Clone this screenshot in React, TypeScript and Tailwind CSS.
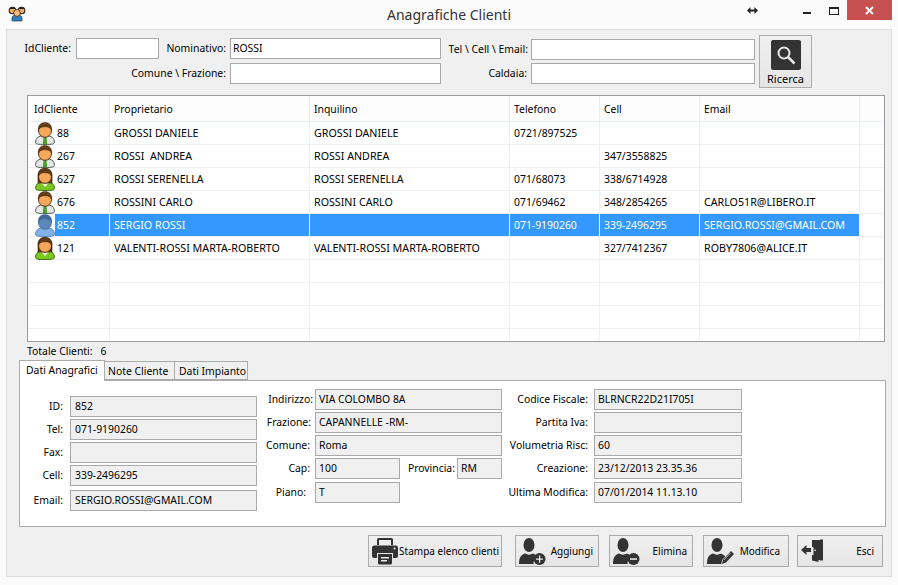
import React from 'react'

type Cliente = { id: string; prop: string; inq: string; tel: string; cell: string; email: string; kind: 'man' | 'woman' | 'sel' }

const clienti: Cliente[] = [
  { id: '88', prop: 'GROSSI DANIELE', inq: 'GROSSI DANIELE', tel: '0721/897525', cell: '', email: '', kind: 'man' },
  { id: '267', prop: 'ROSSI  ANDREA', inq: 'ROSSI ANDREA', tel: '', cell: '347/3558825', email: '', kind: 'man' },
  { id: '627', prop: 'ROSSI SERENELLA', inq: 'ROSSI SERENELLA', tel: '071/68073', cell: '338/6714928', email: '', kind: 'woman' },
  { id: '676', prop: 'ROSSINI CARLO', inq: 'ROSSINI CARLO', tel: '071/69462', cell: '348/2854265', email: 'CARLO51R@LIBERO.IT', kind: 'man' },
  { id: '852', prop: 'SERGIO ROSSI', inq: '', tel: '071-9190260', cell: '339-2496295', email: 'SERGIO.ROSSI@GMAIL.COM', kind: 'sel' },
  { id: '121', prop: 'VALENTI-ROSSI MARTA-ROBERTO', inq: 'VALENTI-ROSSI MARTA-ROBERTO', tel: '', cell: '327/7412367', email: 'ROBY7806@ALICE.IT', kind: 'woman' },
]

function Avatar({ kind }: { kind: Cliente['kind'] }) {
  const sel = kind === 'sel'
  const skin = sel ? '#5a87b8' : '#f5a85c'
  const hair = sel ? '#41699a' : '#643c18'
  const body = sel ? '#7fb2e6' : kind === 'woman' ? '#7cc81e' : '#e4e7e4'
  const line = sel ? '#5585ba' : kind === 'woman' ? '#356c0c' : '#4f5a54'
  return (
    <svg width="20" height="23" viewBox="0 0 20 23" className="shrink-0">
      <path d="M.6 20.500c0-4.500 2.600-6.800 9.400-6.800s9.400 2.300 9.400 6.800c0 1.500-2.200 2-9.400 2s-9.400-.5-9.400-2z" fill={body} stroke={line} strokeWidth="1" />
      {kind === 'man' && <path d="M8.600 14.500h2.800l.9 7.700H7.700z" fill="#4f9f2e" />}
      {kind === 'woman' && <path d="M5.500 14.200h9L10 19z" fill="#fdf0dc" />}
      {kind === 'woman' && <path d="M3 15V7.500C3 3 5.800.4 10 .4s7 2.600 7 7.100V15z" fill={hair} stroke="#2e1c0a" strokeWidth=".6" />}
      <ellipse cx="10" cy="8.800" rx="6.500" ry="6.500" fill={skin} stroke={sel ? '#41699a' : '#2e1c0a'} strokeWidth=".8" />
      <path d="M3.300 8.500C2.700 3 6.200.4 10 .4s7.300 2.600 6.700 8.100c-1-2.600-3.200-3.800-6.700-3.800s-5.700 1.200-6.700 3.800z" fill={hair} stroke={sel ? '#41699a' : '#2e1c0a'} strokeWidth=".4" />
    </svg>
  )
}

function TitleIcon() {
  return (
    <svg width="18" height="18" viewBox="0 0 18 18">
      <path d="M4 17v-3c0-2 2-3 5-3s5 1 5 3v3z" fill="#2f7fc4" stroke="#1d3a55" strokeWidth=".7" />
      <circle cx="4.500" cy="6.500" r="3.300" fill="#f5ad62" stroke="#222" strokeWidth="1.100" />
      <circle cx="13.500" cy="6.500" r="3.300" fill="#f5ad62" stroke="#222" strokeWidth="1.100" />
      <circle cx="9" cy="9" r="3.400" fill="#f9bd7b" stroke="#222" strokeWidth=".8" />
      <path d="M1.500 5c1-2.500 5-2.500 6 0zM10.500 5c1-2.500 5-2.500 6 0z" fill="#222" />
    </svg>
  )
}

function PrintIcon() {
  return (
    <svg width="28" height="28" viewBox="0 0 28 28" fill="#333" className="shrink-0">
      <path d="M6 8V2.500A1.500 1.500 0 0 1 7.500 1h13A1.500 1.500 0 0 1 22 2.500V8h-2V3H8v5z" />
      <path d="M3.500 8.500h21A2.500 2.500 0 0 1 27 11v8a2 2 0 0 1-2 2h-3v-5H6v5H3a2 2 0 0 1-2-2v-8a2.500 2.500 0 0 1 2.500-2.500z" />
      <path d="M7 17h14v9a1.500 1.500 0 0 1-1.500 1.500h-11A1.500 1.500 0 0 1 7 26z" />
      <path d="M10 20h8v1.500h-8zM10 23h6v1.500h-6z" fill="#eee" />
      <circle cx="23.500" cy="11.500" r="1" fill="#eee" />
    </svg>
  )
}

function Person() {
  return (
    <>
      <ellipse cx="11" cy="8" rx="5.500" ry="7" />
      <path d="M1 27c0-7 2-9 6-10.500 2.500 1.500 5.500 1.500 8 0 2 .8 3.500 1.800 4.300 3.300A8 8 0 0 0 15.500 27z" />
    </>
  )
}

function AddIcon() {
  return (
    <svg width="28" height="28" viewBox="0 0 28 28" fill="#333" className="shrink-0">
      <Person />
      <circle cx="21.500" cy="22" r="6" />
      <path d="M21 18.500h1.200V21.500H25v1.200h-2.800v3H21v-3h-3v-1.200h3z" fill="#eee" />
    </svg>
  )
}

function RemoveIcon() {
  return (
    <svg width="28" height="28" viewBox="0 0 28 28" fill="#333" className="shrink-0">
      <Person />
      <circle cx="21.500" cy="22" r="6" />
      <path d="M18 21.300h7v1.500h-7z" fill="#eee" />
    </svg>
  )
}

function EditIcon() {
  return (
    <svg width="28" height="28" viewBox="0 0 28 28" fill="#333" className="shrink-0">
      <Person />
      <path d="M16 27l1-4.500 8-8.500 3 3-8 8.500z" />
      <path d="M18 22.800l6.500-6.800" stroke="#eee" strokeWidth=".8" fill="none" />
    </svg>
  )
}

function ExitIcon() {
  return (
    <svg width="28" height="28" viewBox="0 0 28 28" fill="#333" className="shrink-0">
      <path d="M12 3h9v20h-2.500v2L12 23.500V18h1.500v-8H12z" />
      <path d="M20 2.500h3v21h-3z" />
      <path d="M1 13l5.500-5v3H11v4H6.500v3z" />
      <rect x="14.500" y="12.500" width="1.300" height="1.500" fill="#eee" />
    </svg>
  )
}

function Label({ text, className }: { text: string; className: string }) {
  return <div className={`text-right leading-[21px] whitespace-nowrap ${className}`}>{text}</div>
}

function Box({ value, className }: { value?: string; className: string }) {
  return (
    <div className={`h-[21px] border border-[#a9a9a9] bg-[#f0f0f0] px-[3px] leading-[19px] whitespace-nowrap overflow-hidden ${className}`}>
      {value}
    </div>
  )
}

function Input({ value, className = '' }: { value?: string; className?: string }) {
  return (
    <div className={`h-[21px] border border-[#a9a9a9] bg-white px-[2px] leading-[19px] ${className}`}>{value}</div>
  )
}

function Field({ label, value, labelW, boxW }: { label: string; value: string; labelW: string; boxW: string }) {
  return (
    <div className="flex">
      <Label text={label} className={labelW} />
      <Box value={value} className={boxW} />
    </div>
  )
}

function ActionButton({ icon, label, className }: { icon: React.ReactNode; label: string; className: string }) {
  return (
    <div className={`h-[32px] flex items-center justify-between pl-[2px] border border-[#acacac] bg-gradient-to-b from-[#f0f0f0] to-[#e5e5e5] text-[10px] ${className}`}>
      {icon}
      <span className="whitespace-nowrap">{label}</span>
    </div>
  )
}

const colW = ['w-[82px]', 'w-[200px]', 'w-[200px]', 'w-[90px]', 'w-[100px]', 'w-[160px]']

function Row({ c }: { c?: Cliente }) {
  const sel = c?.kind === 'sel'
  const cells = c ? [c.prop, c.inq, c.tel, c.cell, c.email] : ['', '', '', '', '']
  const cellCls = `h-[22px] border-r leading-[22px] pl-[4px] whitespace-pre overflow-hidden ${sel ? 'bg-[#3399ff] text-white border-white' : 'border-[#f0f0f0]'}`
  return (
    <div className="flex h-[23px] border-b border-[#f0f0f0] shrink-0">
      <div className={`${colW[0]} h-[22px] flex border-r pl-[7px] ${sel ? 'border-white' : 'border-[#f0f0f0]'}`}>
        {c && <Avatar kind={c.kind} />}
        {c && <div className={`flex-1 leading-[22px] pl-[2px] ${sel ? 'bg-[#3399ff] text-white' : ''}`}>{c.id}</div>}
      </div>
      {cells.map((t, i) => (
        <div key={i} className={`${colW[i + 1]} ${cellCls} ${i === 2 || i === 3 ? '' : 'text-[10.7px]'}`}>{t}</div>
      ))}
    </div>
  )
}

export default function App() {
  return (
    <div className="w-[898px] h-[585px] bg-[#fbfbfb] overflow-hidden text-[10.4px] text-black font-['Noto_Sans',sans-serif]">
      {/* title bar */}
      <div className="h-[29px] grid grid-cols-[1fr_auto_1fr]">
        <div className="pl-[8px] pt-[4px]"><TitleIcon /></div>
        <div className="text-[14px] leading-[30px] text-[#333]">Anagrafiche Clienti</div>
        <div className="flex justify-end pr-[6px] items-start">
          <svg width="11" height="7" viewBox="0 0 11 7" className="mt-[7px] mr-[45px]" fill="#222">
            <path d="M0 3.500L3.500 0v2.500h4V0L11 3.500 7.500 7V4.500h-4V7z" />
          </svg>
          <div className="w-[8px] h-[2px] bg-[#222] mt-[12px] mr-[18px]" />
          <div className="w-[10px] h-[8px] border border-t-2 border-[#222] mt-[7px] mr-[8px]" />
          <div className="w-[45px] h-[20px] bg-[#c75050] text-white flex items-center justify-center">
            <svg width="9" height="9" viewBox="0 0 9 9"><path d="M1 1l7 7M8 1L1 8" stroke="#fff" strokeWidth="1.800" /></svg>
          </div>
        </div>
      </div>

      {/* main panel */}
      <div className="mx-[6px] h-[548px] bg-[#f0f0f0] border border-[#dcdcdc] pl-[12px] pr-[5px] flex flex-col">
        {/* filters */}
        <div className="flex pt-[5px] h-[65px]">
          <div className="grid grid-cols-[57px_83px_71px_211px_90px_224px] grid-rows-[21px_21px] gap-y-[4px] mt-[3px]">
            <Label text="IdCliente:" className="pr-[5px]" />
            <Input />
            <Label text="Nominativo:" className="pr-[4px]" />
            <Input value="ROSSI" />
            <Label text="Tel \ Cell \ Email:" className="pr-[3px] mt-px" />
            <Input className="mt-px" />
            <Label text="Comune \ Frazione:" className="col-span-3 pr-[4px]" />
            <Input />
            <Label text="Caldaia:" className="pr-[4px]" />
            <Input />
          </div>
          <div className="ml-[4px] w-[53px] h-[53px] border border-[#acacac] bg-gradient-to-b from-[#f0f0f0] to-[#e5e5e5] flex flex-col items-center pt-[4px]">
            <div className="w-[30px] h-[30px] bg-[#333] rounded-[2px] flex items-center justify-center">
              <svg width="22" height="22" viewBox="0 0 22 22" fill="none" stroke="#e8e8e8">
                <circle cx="9" cy="9" r="5.500" strokeWidth="2" />
                <path d="M13 13l6.500 6.500" strokeWidth="2.500" />
              </svg>
            </div>
            <div className="leading-[14px] mt-[2px] text-[11px]">Ricerca</div>
          </div>
        </div>

        {/* grid */}
        <div className="ml-[8px] w-[858px] h-[247px] border border-[#9a9a9f] bg-white flex flex-col overflow-hidden">
          <div className="flex h-[26px] border-b border-[#e3effb] bg-[#fdfdfd] shrink-0">
            {['IdCliente', 'Proprietario', 'Inquilino', 'Telefono', 'Cell', 'Email'].map((h, i) => (
              <div key={h} className={`${colW[i]} border-r border-[#e3effb] leading-[26px] ${i === 0 ? 'pl-[6px]' : 'pl-[4px]'}`}>{h}</div>
            ))}
          </div>
          {clienti.map((c) => <Row key={c.id} c={c} />)}
          <Row />
          <Row />
          <Row />
          <Row />
        </div>

        <div className="h-[17px] pl-[8px] leading-[16px] mt-px whitespace-pre">Totale Clienti:<span className="ml-[8px]">6</span></div>

        {/* tabs */}
        <div className="flex items-end h-[20px] whitespace-nowrap">
          <div className="w-[86px] h-[21px] -mb-px relative bg-white border border-b-0 border-[#acacac] pl-[6px] leading-[18px]">Dati Anagrafici</div>
          <div className="w-[70px] h-[19px] border border-l-0 border-[#acacac] pl-[3px] leading-[19px]">Note Cliente</div>
          <div className="w-[73px] h-[19px] border border-l-0 border-[#acacac] pl-[4px] leading-[19px]">Dati Impianto</div>
        </div>
        <div className="w-[867px] h-[147px] border border-[#acacac] bg-white flex items-start">
          <div className="flex flex-col gap-[2px] mt-[15px] w-[237px]">
            <Field label="ID:" value="852" labelW="w-[50px] pr-[7px]" boxW="w-[187px] pl-[4px]" />
            <Field label="Tel:" value="071-9190260" labelW="w-[50px] pr-[7px]" boxW="w-[187px] pl-[4px]" />
            <Field label="Fax:" value="" labelW="w-[50px] pr-[7px]" boxW="w-[187px] pl-[4px]" />
            <Field label="Cell:" value="339-2496295" labelW="w-[50px] pr-[7px]" boxW="w-[187px] pl-[4px]" />
            <div className="mt-[2px]">
              <Field label="Email:" value="SERGIO.ROSSI@GMAIL.COM" labelW="w-[50px] pr-[7px]" boxW="w-[187px] pl-[4px]" />
            </div>
          </div>
          <div className="flex flex-col gap-[2px] mt-[8px] w-[245px] ml-[1px]">
            <Field label="Indirizzo:" value="VIA COLOMBO 8A" labelW="w-[57px] pr-[2px]" boxW="w-[187px]" />
            <Field label="Frazione:" value="CAPANNELLE -RM-" labelW="w-[57px] pr-[4px]" boxW="w-[187px]" />
            <Field label="Comune:" value="Roma" labelW="w-[57px] pr-[5px]" boxW="w-[187px]" />
            <div className="flex">
              <Field label="Cap:" value="100" labelW="w-[57px] pr-[5px]" boxW="w-[85px]" />
              <Field label="Provincia:" value="RM" labelW="w-[57px] pr-[2px]" boxW="w-[45px]" />
            </div>
            <div className="mt-[1px]">
              <Field label="Piano:" value="T" labelW="w-[57px] pr-[9px]" boxW="w-[85px]" />
            </div>
          </div>
          <div className="flex flex-col gap-[2px] mt-[8px] ml-[1px]">
            <Field label="Codice Fiscale:" value="BLRNCR22D21I705I" labelW="w-[90px] pr-[6px]" boxW="w-[148px]" />
            <Field label="Partita Iva:" value="" labelW="w-[90px] pr-[6px]" boxW="w-[148px]" />
            <Field label="Volumetria Risc:" value="60" labelW="w-[90px] pr-[6px]" boxW="w-[148px]" />
            <Field label="Creazione:" value="23/12/2013 23.35.36" labelW="w-[90px] pr-[6px]" boxW="w-[148px]" />
            <div className="mt-[1px]">
              <Field label="Ultima Modifica:" value="07/01/2014 11.13.10" labelW="w-[90px] pr-[6px]" boxW="w-[148px]" />
            </div>
          </div>
        </div>

        {/* actions */}
        <div className="flex justify-end mt-[8px] pr-[3px]">
          <ActionButton icon={<PrintIcon />} label="Stampa elenco clienti" className="w-[134px] pr-[2px]" />
          <ActionButton icon={<AddIcon />} label="Aggiungi" className="w-[84px] ml-[13px] pr-[5px]" />
          <ActionButton icon={<RemoveIcon />} label="Elimina" className="w-[84px] ml-[10px] pr-[5px]" />
          <ActionButton icon={<EditIcon />} label="Modifica" className="w-[86px] ml-[10px] pr-[8px]" />
          <ActionButton icon={<ExitIcon />} label="Esci" className="w-[86px] ml-[8px] pr-[8px]" />
        </div>
      </div>
    </div>
  )
}
